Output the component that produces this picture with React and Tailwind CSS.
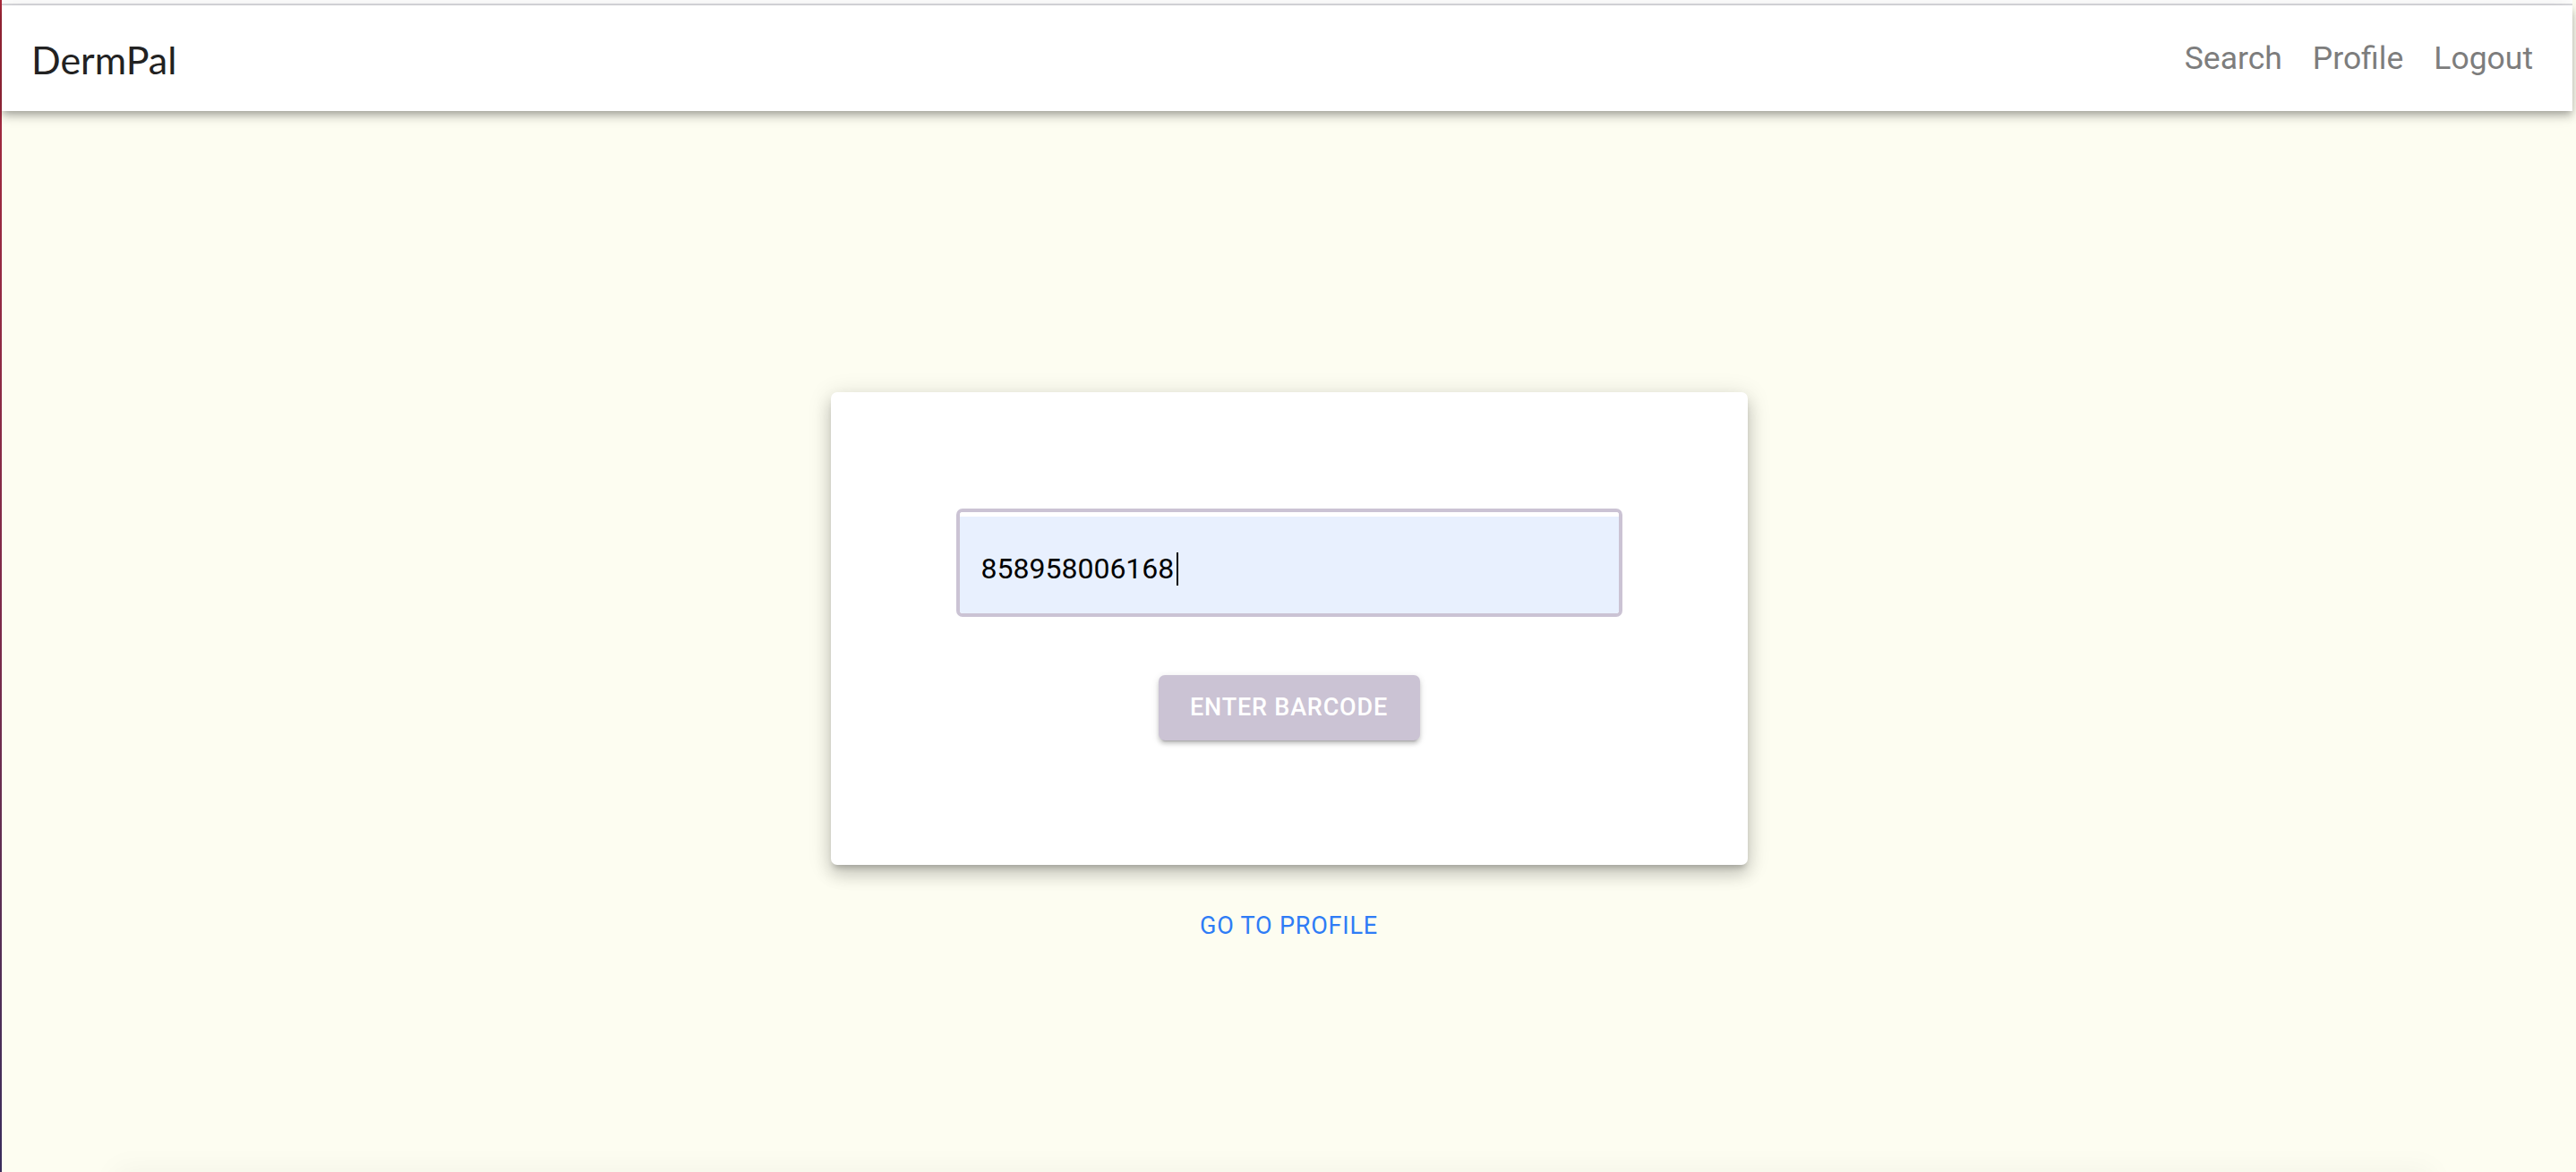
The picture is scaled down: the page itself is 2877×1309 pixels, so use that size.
import React from 'react';

const NAV_LINKS = ['Search', 'Profile', 'Logout'];

export default function App() {
  return (
    <div className="flex bg-[#fdfdf1]">
      {/* thin window edge */}
      <div className="w-[2px] self-stretch bg-gradient-to-b from-[#a8283a] via-[#7a2a4a] to-[#2b2a5e]" />

      <div className="flex-1 min-w-0">
        {/* top chrome line */}
        <div className="h-[4px] bg-white mr-[4px]" />
        <div className="h-[2px] bg-[#dcdce0] mr-[4px]" />

        {/* App bar */}
        <header className="relative z-10 h-[118px] mr-[4px] bg-white flex items-center justify-between pl-[33px] pr-[44px] shadow-[0_4px_7px_-2px_rgba(0,0,0,0.2),0_7px_9px_0_rgba(0,0,0,0.14),0_2px_18px_0_rgba(0,0,0,0.12)]">
          <div className="pt-[2px] text-[43px] leading-[43px] text-[#222] font-['Lato',sans-serif]">DermPal</div>
          <nav className="flex items-center gap-[34px] font-['Roboto',sans-serif] text-[35.5px] leading-[36px] text-[#7d7d7d]">
            {NAV_LINKS.map(l => <span key={l}>{l}</span>)}
          </nav>
        </header>

        {/* Main */}
        <main className="h-[1185px] flex flex-col items-center pt-[314px] font-['Roboto',sans-serif]">
          <div className="w-[1024px] h-[528px] bg-white rounded-[7px] flex flex-col items-center pt-[130px] shadow-[0_6px_6px_-3px_rgba(0,0,0,0.2),0_11px_18px_1px_rgba(0,0,0,0.14),0_4px_26px_2px_rgba(0,0,0,0.12)]">
            <div className="w-[744px] h-[121px] rounded-[7px] border-[4px] border-[#cbc3d4] overflow-hidden flex flex-col">
              <div className="h-[5px] bg-white" />
              <div className="flex-1 bg-[#e8f0fe] flex items-center pl-[24px] pt-[8px]">
                <span className="text-[32px] leading-[32px] text-black">858958006168</span>
                <span className="ml-[3px] w-[2px] h-[37px] bg-black" />
              </div>
            </div>

            <button className="mt-[65px] w-[292px] h-[73px] rounded-[7px] bg-[#cbc3d4] text-white text-[27px] font-medium tracking-[0.8px] shadow-[0_5px_2px_-4px_rgba(0,0,0,0.2),0_4px_4px_0_rgba(0,0,0,0.14),0_2px_9px_0_rgba(0,0,0,0.12)]">
              ENTER BARCODE
            </button>
          </div>

          <a className="mt-[55px] text-[27px] leading-[27px] tracking-[0.8px] text-[#2e7cf6]">GO TO PROFILE</a>
        </main>

        {/* element below the fold casting its shadow */}
        <div className="h-[120px] ml-[126px] mr-[160px] bg-[#fdfdf1] shadow-[0_-4px_30px_rgba(0,0,0,0.04)]" />
      </div>
    </div>
  );
}
